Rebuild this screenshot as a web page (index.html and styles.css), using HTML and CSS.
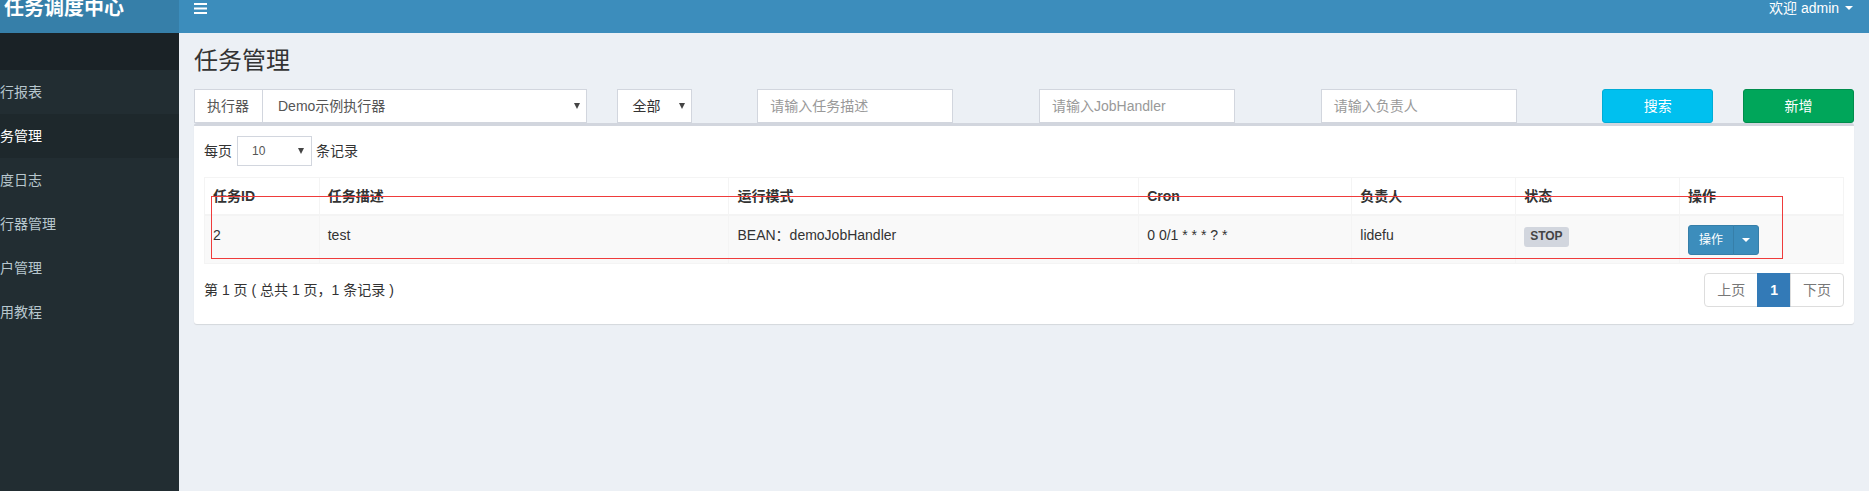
FILE: index.html
```html
<!DOCTYPE html>
<html lang="zh-CN">
<head>
<meta charset="utf-8">
<title>任务调度中心</title>
<link rel="stylesheet" href="styles.css">
</head>
<body>
<header class="topbar">
  <div class="logo"><div class="logo-inner">任务调度中心</div></div>
  <nav class="navbar">
    <span class="toggle"><svg width="13" height="11" viewBox="0 0 13 11"><rect x="0" y="0" width="13" height="2" fill="#fff"/><rect x="0" y="4.5" width="13" height="2" fill="#fff"/><rect x="0" y="9" width="13" height="2" fill="#fff"/></svg></span>
    <span class="user">欢迎 admin <span class="caret"></span></span>
  </nav>
</header>
<div class="main">
  <aside class="sidebar">
    <div class="sb-header"></div>
    <div class="sb-item"><span>运行报表</span></div>
    <div class="sb-item active"><span>任务管理</span></div>
    <div class="sb-item"><span>调度日志</span></div>
    <div class="sb-item"><span>执行器管理</span></div>
    <div class="sb-item"><span>用户管理</span></div>
    <div class="sb-item"><span>使用教程</span></div>
  </aside>
  <main class="content">
    <h1>任务管理</h1>
    <div class="filters">
      <div class="f-exec input-group">
        <span class="addon">执行器</span>
        <div class="select select-wide"><span>Demo示例执行器</span><span class="arrow"></span></div>
      </div>
      <div class="f-status"><div class="select select-status"><span>全部</span><span class="arrow"></span></div></div>
      <div class="f-desc"><div class="input">请输入任务描述</div></div>
      <div class="f-handler"><div class="input">请输入JobHandler</div></div>
      <div class="f-author"><div class="input">请输入负责人</div></div>
      <div class="f-search"><button class="btn btn-info">搜索</button></div>
      <div class="f-add"><button class="btn btn-success">新增</button></div>
    </div>
    <section class="box">
      <div class="length">
        <span>每页</span>
        <div class="select select-len"><span>10</span><span class="arrow"></span></div>
        <span>条记录</span>
      </div>
      <table class="grid">
        <colgroup>
          <col class="c7"><col class="c25"><col class="c25"><col class="c13"><col class="c10"><col class="c10"><col class="c10">
        </colgroup>
        <thead>
          <tr><th>任务ID</th><th>任务描述</th><th>运行模式</th><th>Cron</th><th>负责人</th><th>状态</th><th>操作</th></tr>
        </thead>
        <tbody>
          <tr>
            <td>2</td>
            <td>test</td>
            <td>BEAN：demoJobHandler</td>
            <td>0 0/1 * * * ? *</td>
            <td>lidefu</td>
            <td><span class="label">STOP</span></td>
            <td><div class="btn-group"><button class="btn-op">操作</button><button class="btn-op btn-caret"><span class="caret"></span></button></div></td>
          </tr>
        </tbody>
      </table>
      <div class="pager-row">
        <div class="info">第 1 页 ( 总共 1 页，1 条记录 )</div>
        <ul class="pagination">
          <li>上页</li>
          <li class="active">1</li>
          <li>下页</li>
        </ul>
      </div>
    </section>
  </main>
</div>
<div class="annot"></div>
</body>
</html>
```
FILE: styles.css
```css
* { box-sizing: border-box; }
html, body { margin: 0; padding: 0; }
body {
  width: 1869px;
  height: 491px;
  overflow: hidden;
  position: relative;
  background: #ecf0f5;
  color: #333;
  font-family: "Liberation Sans", Arial, "Noto Sans CJK SC", sans-serif;
  font-size: 14px;
  line-height: 20px;
}

/* top bar */
.topbar { display: flex; height: 33px; overflow: hidden; }
.logo { width: 179px; flex: none; background: #367fa9; overflow: hidden; }
.logo-inner {
  width: 230px;
  height: 50px;
  margin: -17px 0 0 -51px;
  line-height: 50px;
  text-align: center;
  color: #fff;
  font-size: 20px;
  font-weight: bold;
}
.navbar {
  flex: 1;
  background: #3c8dbc;
  display: flex;
  justify-content: space-between;
  align-items: flex-start;
}
.toggle { display: block; margin: 3px 0 0 15px; line-height: 0; }
.user {
  display: flex;
  align-items: center;
  margin-top: -2px;
  padding-right: 16px;
  color: #fff;
  white-space: pre;
}
.caret {
  display: inline-block;
  width: 0;
  height: 0;
  border-top: 4px solid #fff;
  border-left: 4px solid transparent;
  border-right: 4px solid transparent;
  margin-left: 2px;
}

/* sidebar */
.main { display: flex; height: 458px; }
.sidebar { width: 179px; flex: none; background: #222d32; overflow: hidden; }
.sb-header { height: 37px; background: #1a2226; }
.sb-item { height: 44px; padding: 12px 0; color: #b8c7ce; white-space: nowrap; }
.sb-item span { display: inline-block; margin-left: -14px; }
.sb-item.active { background: #1e282c; color: #fff; }

/* content */
.content { flex: 1; padding: 15px 15px 0; min-width: 0; }
.content h1 { margin: 0; font-size: 24px; line-height: 26px; font-weight: normal; color: #333; }

.filters {
  margin-top: 15px;
  display: grid;
  grid-template-columns: repeat(12, 1fr);
  column-gap: 30px;
  height: 34px;
}
.f-exec { grid-column: 1 / span 3; }
.f-status { grid-column: 4 / span 1; }
.f-desc { grid-column: 5 / span 2; }
.f-handler { grid-column: 7 / span 2; }
.f-author { grid-column: 9 / span 2; }
.f-search { grid-column: 11 / span 1; }
.f-add { grid-column: 12 / span 1; }

.input-group { display: flex; height: 34px; }
.addon {
  width: 68px;
  flex: none;
  border: 1px solid #d2d6de;
  border-right: 0;
  background: #fff;
  color: #555;
  padding: 6px 0 6px 12px;
}
.select {
  display: flex;
  align-items: center;
  justify-content: space-between;
  background: #fff;
  border: 1px solid #d2d6de;
  color: #555;
}
.select-wide { flex: 1; height: 34px; padding: 0 6px 0 15px; }
.select-status { width: 75px; height: 34px; padding: 0 6px 0 15px; color: #333; }
.arrow {
  width: 0;
  height: 0;
  border-top: 6px solid #444;
  border-left: 3px solid transparent;
  border-right: 3px solid transparent;
}
.input {
  width: 196px;
  height: 34px;
  border: 1px solid #d2d6de;
  background: #fff;
  color: #999;
  padding: 6px 12px;
  white-space: nowrap;
}
.btn {
  display: block;
  width: 100%;
  height: 34px;
  border: 1px solid;
  border-radius: 3px;
  color: #fff;
  font: inherit;
  padding: 6px 12px;
}
.btn-info { background: #00c0ef; border-color: #00acd6; }
.btn-success { background: #00a65a; border-color: #008d4c; }

/* box */
.box {
  background: #fff;
  border-top: 3px solid #d2d6de;
  border-radius: 3px;
  box-shadow: 0 1px 1px rgba(0, 0, 0, 0.1);
  padding: 10px 10px 17px;
}
.length { display: flex; align-items: center; height: 30px; color: #333; }
.select-len {
  width: 75px;
  height: 30px;
  margin: 0 4px 0 5px;
  padding: 0 7px 0 14px;
  font-size: 12px;
  color: #555;
}

.grid {
  width: 100%;
  margin-top: 11px;
  border-collapse: collapse;
  table-layout: fixed;
  border: 1px solid #f4f4f4;
}
.c7 { width: 7%; }
.c25 { width: 25%; }
.c13 { width: 13%; }
.c10 { width: 10%; }
.grid th, .grid td {
  border: 1px solid #f4f4f4;
  padding: 8px;
  text-align: left;
  vertical-align: top;
  line-height: 20px;
  white-space: nowrap;
}
.grid th { font-weight: bold; color: #333; border-bottom-width: 2px; }
.grid tbody tr { background: #f9f9f9; }
.grid td { padding-top: 9px; }

.label {
  display: inline-block;
  margin-top: 2px;
  padding: 3px 6px 4px;
  background: #d2d6de;
  color: #444;
  font-size: 12px;
  line-height: 13px;
  font-weight: bold;
  border-radius: 3px;
}
.btn-group { display: flex; }
.btn-op {
  height: 30px;
  padding: 5px 10px;
  background: #3c8dbc;
  border: 1px solid #367fa9;
  color: #fff;
  font: inherit;
  font-size: 12px;
  line-height: 18px;
  border-radius: 3px 0 0 3px;
}
.btn-caret {
  margin-left: -1px;
  padding: 5px 8px;
  border-radius: 0 3px 3px 0;
  display: flex;
  align-items: center;
}
.btn-caret .caret { margin-left: 0; }

.pager-row {
  display: flex;
  justify-content: space-between;
  align-items: center;
  margin-top: 9px;
}
.info { color: #333; }
.pagination { display: flex; list-style: none; margin: 0; padding: 0; }
.pagination li {
  padding: 6px 12px;
  border: 1px solid #ddd;
  margin-left: -1px;
  color: #777;
  background: #fff;
  line-height: 20px;
}
.pagination li:first-child { border-radius: 4px 0 0 4px; margin-left: 0; }
.pagination li:last-child { border-radius: 0 4px 4px 0; }
.pagination li.active { background: #337ab7; border-color: #337ab7; color: #fff; font-weight: bold; }

/* red annotation rectangle drawn over the table row */
.annot {
  position: absolute;
  left: 211px;
  top: 196px;
  width: 1572px;
  height: 63px;
  border: 1px solid #ef3b3b;
}
```
